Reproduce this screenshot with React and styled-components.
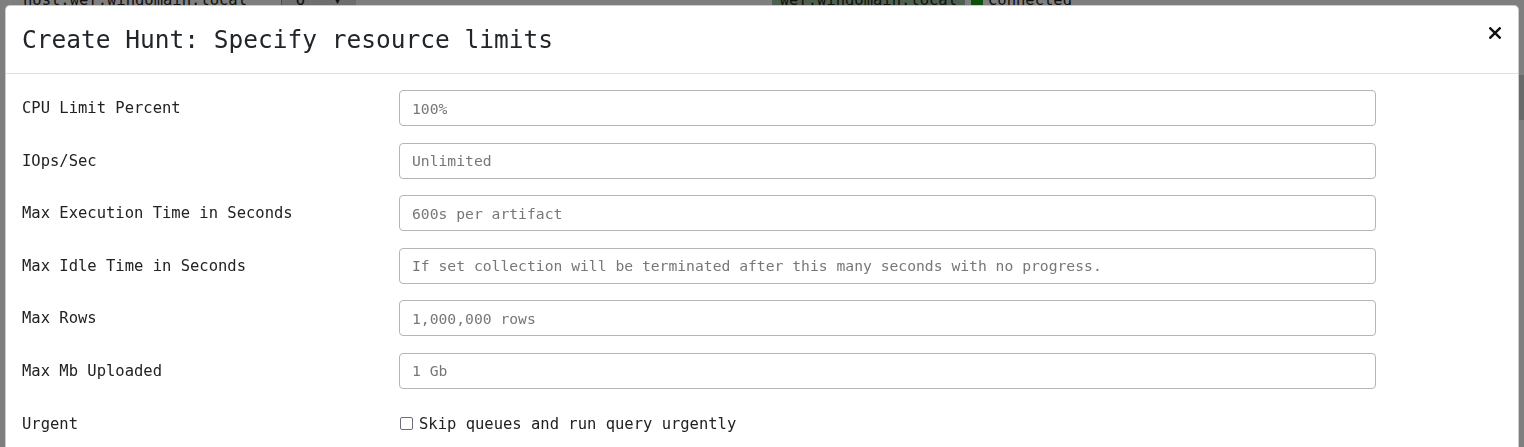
import React from "react";
import styled, { createGlobalStyle } from "styled-components";

const GlobalStyle = createGlobalStyle`
  html, body { margin: 0; padding: 0; overflow: hidden; background: #ffffff; }
  body { font-family: "DejaVu Sans Mono", "Liberation Mono", monospace; }
  * { box-sizing: border-box; }
`;

const Page = styled.div`
  width: 1524px;
  height: 447px;
  background: #ffffff;
  position: relative;
  overflow: hidden;
`;

const TopBar = styled.div`
  display: flex;
  align-items: center;
  height: 18px;
  margin-top: -9px;
  padding-left: 23px;
  font-size: 15.5px;
  color: #222;
`;

const HostText = styled.span`
  width: 258px;
`;

const SearchBtn = styled.span`
  display: inline-flex;
  align-items: center;
  justify-content: space-around;
  width: 75px;
  height: 18px;
  background: #dcdcdc;
  border-left: 1px solid #999;
`;

const Spacer = styled.div`
  flex: 1;
`;

const ClientChip = styled.span`
  display: inline-flex;
  align-items: center;
  height: 18px;
  padding: 0 8px;
  background: #9ebf9e;
  margin-right: 6px;
`;

const StatusDot = styled.span`
  width: 12px;
  height: 12px;
  background: #1aa31a;
  margin-right: 5px;
`;

const StatusText = styled.span`
  margin-right: 452px;
`;

const ScrollThumb = styled.div`
  position: absolute;
  right: 0;
  top: 75px;
  width: 5px;
  height: 45px;
  background: #d4d4d4;
`;

const Backdrop = styled.div`
  position: fixed;
  inset: 0;
  background: rgba(0, 0, 0, 0.5);
`;

const Dialog = styled.div`
  position: fixed;
  top: 5px;
  left: 5px;
  width: 1514px;
  bottom: -20px;
  background: #ffffff;
  border: 1px solid rgba(0, 0, 0, 0.2);
  border-radius: 5px;
  display: flex;
  flex-direction: column;
  color: #212529;
`;

const Header = styled.div`
  display: flex;
  align-items: center;
  justify-content: space-between;
  padding: 16px 16px;
  border-bottom: 1px solid #dee2e6;
`;

const Title = styled.h5`
  margin: 0;
  font-size: 24.5px;
  line-height: 35px;
  font-weight: 500;
`;

const CloseButton = styled.button`
  border: 0;
  background: transparent;
  padding: 0;
  margin: -14px 1px 0 0;
  display: flex;
  cursor: pointer;
  color: #111;
`;

const Body = styled.div`
  padding: 16px 16px;
  display: grid;
  grid-template-columns: 377px 977px;
  row-gap: 16.6px;
`;

const Label = styled.label`
  display: flex;
  align-items: center;
  height: 36px;
  font-size: 15.5px;
  color: #222;
`;

const Input = styled.input`
  height: 36px;
  width: 100%;
  border: 1px solid #b5b5b5;
  border-radius: 4px;
  padding: 0 12px;
  font-family: "DejaVu Sans Mono", "Liberation Mono", monospace;
  font-size: 14.7px;
  color: #222;
  background: #fff;
  &::placeholder {
    color: #777;
  }
`;

const CheckRow = styled.label`
  display: flex;
  align-items: center;
  height: 36px;
  font-size: 15.5px;
  color: #222;
  gap: 6px;
`;

const CheckBox = styled.input`
  appearance: none;
  width: 13px;
  height: 13px;
  margin: 0 0 0 1px;
  border: 1.5px solid #6e6e7a;
  border-radius: 2px;
  background: #fff;
`;

const fields = [
  ["CPU Limit Percent", "100%"],
  ["IOps/Sec", "Unlimited"],
  ["Max Execution Time in Seconds", "600s per artifact"],
  ["Max Idle Time in Seconds", "If set collection will be terminated after this many seconds with no progress."],
  ["Max Rows", "1,000,000 rows"],
  ["Max Mb Uploaded", "1 Gb"],
];

export default function App() {
  return (
    <>
      <GlobalStyle />
      <Page>
        <TopBar>
          <HostText>host.wef.windomain.local</HostText>
          <SearchBtn>
            <span>Q</span>
            <span>▾</span>
          </SearchBtn>
          <Spacer />
          <ClientChip>wef.windomain.local</ClientChip>
          <StatusDot />
          <StatusText>Connected</StatusText>
        </TopBar>
        <ScrollThumb />
      </Page>
      <Backdrop />
      <Dialog role="dialog">
        <Header>
          <Title>Create Hunt: Specify resource limits</Title>
          <CloseButton aria-label="Close">
            <svg width="12" height="12" viewBox="0 0 12 12">
              <path d="M1.3 1.3 L10.7 10.7 M10.7 1.3 L1.3 10.7" stroke="#111" strokeWidth="2.4" strokeLinecap="square" />
            </svg>
          </CloseButton>
        </Header>
        <Body>
          {fields.map(([label, ph]) => (
            <React.Fragment key={label}>
              <Label>{label}</Label>
              <Input placeholder={ph} />
            </React.Fragment>
          ))}
          <Label>Urgent</Label>
          <CheckRow>
            <CheckBox type="checkbox" />
            Skip queues and run query urgently
          </CheckRow>
        </Body>
      </Dialog>
    </>
  );
}
